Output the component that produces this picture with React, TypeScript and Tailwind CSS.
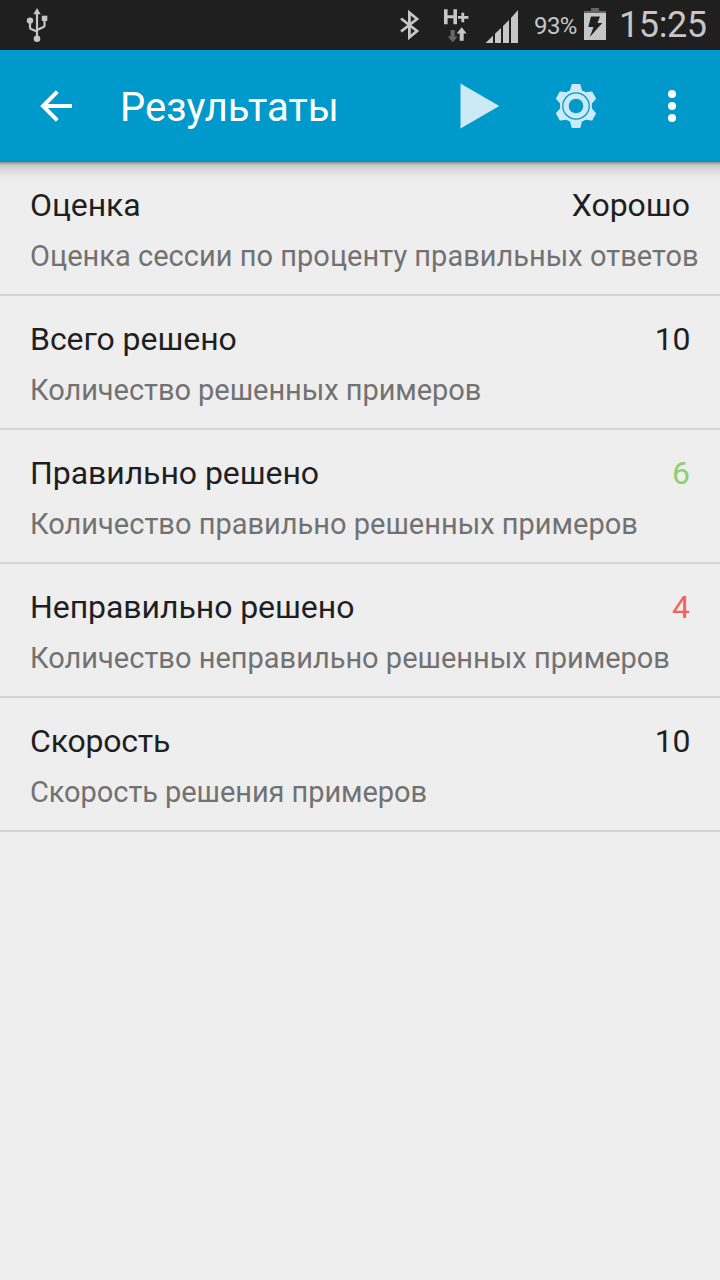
import React from "react";

type Row = { title: string; value: string; note: string; color: string; titleSpacing: string; noteSpacing: string };

const rows: Row[] = [
  { title: "Оценка", value: "Хорошо", note: "Оценка сессии по проценту правильных ответов", color: "text-[#1f1f1f]", titleSpacing: "tracking-[-0.1px]", noteSpacing: "tracking-[0.02px]" },
  { title: "Всего решено", value: "10", note: "Количество решенных примеров", color: "text-[#1f1f1f] tracking-[-0.4px]", titleSpacing: "tracking-[-0.06px]", noteSpacing: "tracking-[-0.05px]" },
  { title: "Правильно решено", value: "6", note: "Количество правильно решенных примеров", color: "text-[#8fce71]", titleSpacing: "tracking-[-0.06px]", noteSpacing: "tracking-normal" },
  { title: "Неправильно решено", value: "4", note: "Количество неправильно решенных примеров", color: "text-[#f26464]", titleSpacing: "tracking-[-0.06px]", noteSpacing: "tracking-normal" },
  { title: "Скорость", value: "10", note: "Скорость решения примеров", color: "text-[#1f1f1f] tracking-[-0.4px]", titleSpacing: "tracking-[-0.2px]", noteSpacing: "tracking-[-0.07px]" },
];

function StatusBar() {
  return (
    <div className="flex h-[50px] items-start bg-[#1f1f1f] text-[#c6c6c6]">
      <svg className="ml-[26px] mt-[8px] h-[34px] w-[23px]" viewBox="26 8 23 34" fill="none" stroke="#c6c6c6" strokeWidth="2.200">
        <path d="M37 13v25M30 21v6.500q0 1 1 1.500l6 2.500M44.500 20v5.500q0 1-1 1.500L37 30" />
        <g fill="#c6c6c6" stroke="none">
          <path d="M37 8l3.700 6.200h-7.400z" />
          <circle cx="30" cy="20.600" r="3.200" />
          <rect x="41.800" y="15.700" width="5.500" height="5.300" />
          <circle cx="37" cy="38.700" r="3.300" />
        </g>
      </svg>
      <svg className="ml-[349px] mt-[8px] h-[34px] w-[24px]" viewBox="398 8 24 34" fill="none" stroke="#c6c6c6" strokeWidth="2.800">
        <path d="M401 18.500l16 12.500-7.600 6.300V12.700L417 19l-16 12.500" />
      </svg>
      <svg className="ml-[20px] mt-[8px] h-[34px] w-[27px]" viewBox="442 8 27 34">
        <path d="M444 9.300h3.600v5.900h5.800V9.300h3.600v15h-3.600v-6h-5.800v6H444zM461.400 12.700h2.800v3.300h4.200v2.700h-4.200v3.500h-2.800v-3.500H458V16h3.400z" fill="#c6c6c6" />
        <path d="M450.600 30h4.100v6.500h2.900l-4.900 5.800-4.900-5.800h2.800z" fill="#666" />
        <path d="M461.700 27.300l5 6.200h-3v7.200h-4v-7.200h-3z" fill="#c6c6c6" />
      </svg>
      <svg className="ml-[16px] mt-[8px] h-[36px] w-[34px]" viewBox="485 8 34 36" fill="#c6c6c6">
        <path d="M485.500 43l7.500-7.300V43zM495 33.700l6-5.800V43h-6zM503 26l6-6v23h-6zM511 18l7-8v33h-7z" />
      </svg>
      <span className="ml-[15px] mt-[11px] w-[49px] whitespace-nowrap text-[24px] leading-[30px] tracking-[-0.6px]">93%</span>
      <svg className="ml-[1px] mt-[8px] h-[33px] w-[22px]" viewBox="584 8 22 33">
        <path d="M591 8h8v3h7v2h-22v-2h7z" fill="#666" />
        <path d="M584 13h22v27h-22z" fill="#c6c6c6" />
        <path d="M591 16.500h9l-2.500 6.500h4.800l-12.500 14 3.700-10h-5.200z" fill="#1f1f1f" />
      </svg>
      <span className="ml-[13px] mt-[3px] whitespace-nowrap text-[36px] leading-[44px] tracking-[-0.4px]">15:25</span>
    </div>
  );
}

function ToolBar() {
  return (
    <header className="relative z-10 flex h-[112px] items-center bg-[#0099cc] text-white">
      <svg className="ml-[40px] h-[32px] w-[32px]" viewBox="0 0 32 32" fill="none" stroke="white" strokeWidth="4">
        <path d="M32 16H4M17.300 1.700L3 16l14.300 14.300" />
      </svg>
      <h1 className="ml-[48px] w-[330px] whitespace-nowrap pt-[4px] text-[40px] leading-[48px]">Результаты</h1>
      <svg className="ml-[10px] h-[46px] w-[40px]" viewBox="460 83 40 46" fill="#cceaf5">
        <path d="M460.500 83.600L499.300 106 460.500 128.400z" />
      </svg>
      <svg className="ml-[54px] h-[46px] w-[44px]" viewBox="554 83 44 46">
        <path
          d="M572.500 84h7q.8 0 1 .8l1.500 5.600q1.900.7 3.700 1.900l5.600-.8q.8-.2 1.200.6l3.300 5.800q.4.800-.1 1.400l-3.800 4.300v4.800l3.800 4.300q.5.600.1 1.400l-3.300 5.800q-.4.800-1.200.6l-5.600-.8q-1.800 1.200-3.700 1.900l-1.500 5.600q-.2.800-1 .8h-7q-.8 0-1-.8l-1.500-5.600q-1.900-.7-3.700-1.900l-5.600.8q-.8.2-1.200-.6l-3.300-5.800q-.4-.8.100-1.400l3.800-4.300v-4.800l-3.800-4.300q-.5-.6-.1-1.400l3.300-5.800q.4-.8 1.200-.6l5.600.8q1.800-1.200 3.700-1.900l1.500-5.600q.2-.8 1-.8z"
          fill="#cceaf5"
        />
        <circle cx="576" cy="106" r="13.200" fill="none" stroke="#0099cc" strokeWidth="1.300" />
        <circle cx="576" cy="106" r="7.300" fill="#0099cc" />
      </svg>
      <svg className="ml-[70px] h-[32px] w-[8px]" viewBox="0 0 8 32" fill="white">
        <circle cx="4" cy="4" r="4" />
        <circle cx="4" cy="16" r="4" />
        <circle cx="4" cy="28" r="4" />
      </svg>
      <div className="absolute inset-x-0 top-full h-[20px] bg-[linear-gradient(to_bottom,rgba(0,0,0,0.45)_0px,rgba(0,0,0,0.28)_1.500px,rgba(0,0,0,0.16)_3px,rgba(0,0,0,0.08)_8px,rgba(0,0,0,0.04)_12px,transparent_18px)]" />
    </header>
  );
}

export default function App() {
  return (
    <div className="h-[1280px] w-[720px] overflow-hidden bg-[#eeeeee] font-['Roboto',sans-serif]">
      <StatusBar />
      <ToolBar />
      <main>
        {rows.map((row) => (
          <section key={row.title} className="h-[134px] border-b-2 border-[#d4d4d4] px-[30px] pt-[23px]">
            <div className="flex justify-between text-[32px] leading-[40px]">
              <span className={`text-[#1f1f1f] ${row.titleSpacing}`}>{row.title}</span>
              <span className={row.color}>{row.value}</span>
            </div>
            <p className={`mt-[13px] whitespace-nowrap text-[29px] leading-[36px] text-[#727272] ${row.noteSpacing}`}>{row.note}</p>
          </section>
        ))}
      </main>
    </div>
  );
}
